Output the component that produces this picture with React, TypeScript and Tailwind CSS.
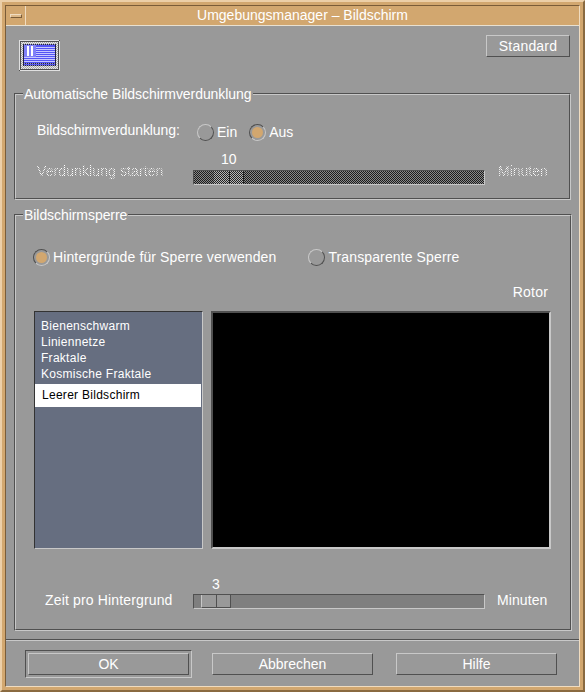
import React from "react";

function Btn({ label, w }: { label: string; w: string }) {
  return (
    <div className={`${w} h-[22px] flex items-center justify-center border border-t-[#c8c8c8] border-l-[#c8c8c8] border-r-[#505050] border-b-[#505050] text-[14px] text-white`}>
      {label}
    </div>
  );
}

function Radio({ on, label, wide }: { on?: boolean; label: string; wide?: boolean }) {
  return (
    <div className="flex items-center gap-[3px]">
      <div
        className={
          on
            ? "w-[17px] h-[17px] rounded-full border border-t-[#505050] border-l-[#505050] border-r-[#c8c8c8] border-b-[#c8c8c8] flex items-center justify-center"
            : "w-[17px] h-[17px] rounded-full border border-t-[#c8c8c8] border-l-[#c8c8c8] border-r-[#505050] border-b-[#505050]"
        }
      >
        {on && <div className="w-[11px] h-[11px] rounded-full bg-[#d2a76f]" />}
      </div>
      <span className={wide ? "text-[14px] text-white tracking-[0.12px]" : "text-[14px] text-white"}>{label}</span>
    </div>
  );
}

function Group({ title, className, children }: { title: string; className: string; children: React.ReactNode }) {
  return (
    <div className={`relative border border-t-[#505050] border-l-[#505050] border-r-[#c8c8c8] border-b-[#c8c8c8] ${className}`}>
      <div className="h-full border border-t-[#c8c8c8] border-l-[#c8c8c8] border-r-[#505050] border-b-[#505050]">
        {children}
      </div>
      <div className="absolute left-[8px] top-[-8px] bg-[#999999] px-[1px] text-[14px] leading-[16px] text-white tracking-[-0.06px]">{title}</div>
    </div>
  );
}

function Icon() {
  return (
    <svg width="41" height="31" viewBox="0 0 41 31" shapeRendering="crispEdges">
      <defs>
        <pattern id="st" width="2" height="2" patternUnits="userSpaceOnUse">
          <rect width="2" height="2" fill="#a8a8a8" />
          <rect width="1" height="1" fill="#e8e8e8" />
          <rect x="1" y="1" width="1" height="1" fill="#e8e8e8" />
        </pattern>
        <pattern id="da" width="2" height="1" patternUnits="userSpaceOnUse">
          <rect width="2" height="1" fill="#9090c0" />
          <rect width="1" height="1" fill="#202040" />
        </pattern>
      </defs>
      <rect width="41" height="31" fill="#505050" />
      <rect width="40" height="1" fill="#e0e0e0" />
      <rect width="1" height="30" fill="#e0e0e0" />
      <rect x="1" y="30" width="40" height="1" fill="#e0e0e0" />
      <rect x="40" y="1" width="1" height="30" fill="#e0e0e0" />
      <rect x="2" y="2" width="37" height="27" fill="url(#st)" />
      <rect x="4" y="4" width="33" height="22" fill="url(#da)" />
      <rect x="5" y="5" width="31" height="20" fill="#5454f4" />
      {[7, 9, 11, 13, 15, 17, 19, 21].map((y) => (
        <rect key={y} x="5" y={y} width="31" height="1" fill="#c8c8ff" />
      ))}
      <rect x="5" y="5" width="12" height="12" fill="#8080f8" />
      <rect x="8" y="6" width="2" height="10" fill="#fff" />
      <rect x="12" y="6" width="2" height="10" fill="#fff" />
      <rect x="5" y="23" width="31" height="1" fill="url(#da)" />
    </svg>
  );
}

const disabled =
  "text-[14px] text-transparent bg-clip-text bg-[repeating-conic-gradient(#ffffff_0_25%,#999999_0_50%)] bg-[length:2px_2px]";

export default function App() {
  return (
    <div className="w-[585px] h-[692px] bg-[#d2a76f] border-t-2 border-l-2 border-t-[#eccfa8] border-l-[#eccfa8] border-r-2 border-b-2 border-r-[#8a6a40] border-b-[#8a6a40] p-[3px] font-['Liberation_Sans',Arial,sans-serif]">
      <div className="h-full flex flex-col bg-[#999999] border border-t-[#7a5c38] border-l-[#7a5c38] border-r-[#f0dcc0] border-b-[#f0dcc0]">
        {/* title bar */}
        <div className="h-[20px] shrink-0 flex bg-[#d2a76f] border-b border-b-[#e8e0d0]">
          <div className="w-[20px] shrink-0 flex items-center justify-center border-r border-r-[#f0dcc0]">
            <div className="w-[12px] h-[4px] bg-[#dcb888] border border-t-[#f0dcc0] border-l-[#f0dcc0] border-r-[#7a5c38] border-b-[#7a5c38]" />
          </div>
          <div className="flex-1 text-center text-[14px] leading-[19px] text-white">Umgebungsmanager – Bildschirm</div>
        </div>

        {/* header */}
        <div className="flex justify-between items-start h-[67px] shrink-0 pl-[13px] pr-[9px] pt-[9px]">
          <div className="pt-[5px]"><Icon /></div>
          <Btn label="Standard" w="w-[84px] tracking-[0.2px]" />
        </div>

        {/* group 1 */}
        <Group title="Automatische Bildschirmverdunklung" className="h-[107px] shrink-0 ml-[8px] mr-[8px]">
          <div className="flex items-center h-[28px] mt-[23px] pl-[21px]">
            <span className="w-[160px] pb-[4px] text-[14px] text-white tracking-[-0.09px]">Bildschirmverdunklung:</span>
            <Radio label="Ein" />
            <div className="w-[12px]" />
            <Radio on label="Aus" />
          </div>
          <div className="flex items-end h-[39px] pl-[21px]">
            <span className={`w-[156px] pb-[3px] tracking-[0.1px] ${disabled}`}>Verdunklung starten</span>
            <div className="relative w-[292px] h-[15px] border border-t-[#505050] border-l-[#505050] border-r-[#c8c8c8] border-b-[#c8c8c8] bg-[repeating-conic-gradient(#1c1c1c_0_25%,#888888_0_50%)] bg-[length:2px_2px]">
              <div className="absolute left-[20px] top-0 bottom-0 w-[30px] bg-[repeating-conic-gradient(#222222_0_25%,#b4b4b4_0_50%)] bg-[length:2px_2px] border-r border-r-[#222]" />
              <div className="absolute left-[35px] top-0 bottom-0 w-px bg-[#222]" />
              <div className="absolute left-[27px] top-[-20px] text-[14px] leading-[16px] text-white">10</div>
            </div>
            <span className={`ml-[13px] pb-[3px] ${disabled}`}>Minuten</span>
          </div>
        </Group>

        {/* group 2 */}
        <Group title="Bildschirmsperre" className="h-[417px] shrink-0 mt-[14px] ml-[8px] mr-[7px]">
          <div className="flex items-center gap-[32px] h-[20px] mt-[31px] pl-[17px]">
            <Radio on wide label="Hintergründe für Sperre verwenden" />
            <Radio wide label="Transparente Sperre" />
          </div>
          <div className="h-[16px] mt-[17px] pr-[22px] text-right text-[14px] leading-[16px] text-white tracking-[0.2px]">Rotor</div>
          <div className="flex gap-[8px] mt-[11px] pl-[18px]">
            <div className="w-[169px] h-[238px] bg-[#666e80] border border-t-[#333] border-l-[#333] border-r-[#c8c8c8] border-b-[#c8c8c8] text-[12px] text-white tracking-[0.28px]">
              <div className="pt-[6px]">
                {["Bienenschwarm", "Liniennetze", "Fraktale", "Kosmische Fraktale"].map((t) => (
                  <div key={t} className="h-[16px] leading-[16px] pl-[6px]">{t}</div>
                ))}
                <div className="h-[23px] mt-[2px] leading-[23px] pl-[7px] bg-white text-black mr-px">Leerer Bildschirm</div>
              </div>
            </div>
            <div className="w-[340px] h-[238px] bg-black border-2 border-t-[#505050] border-l-[#505050] border-r-[#c8c8c8] border-b-[#c8c8c8]" />
          </div>
          <div className="flex items-center h-[15px] mt-[45px] pl-[29px]">
            <span className="w-[148px] pb-[2px] text-[14px] text-white tracking-[0.15px]">Zeit pro Hintergrund</span>
            <div className="relative w-[292px] h-[15px] border border-t-[#505050] border-l-[#505050] border-r-[#c8c8c8] border-b-[#c8c8c8] bg-[#7f7f7f]">
              <div className="absolute left-[7px] top-0 bottom-0 w-[30px] bg-[#999999] border-l border-l-[#c8c8c8] border-r border-r-[#505050] border-b border-b-[#505050]" />
              <div className="absolute left-[22px] top-0 bottom-0 w-px bg-[#505050]" />
              <div className="absolute left-[18px] top-[-19px] text-[14px] leading-[16px] text-white">3</div>
            </div>
            <span className="ml-[12px] pb-[2px] text-[14px] text-white tracking-[0.1px]">Minuten</span>
          </div>
        </Group>

        {/* bottom */}
        <div className="mt-[8px] shrink-0 border-t border-t-[#505050]">
          <div className="border-t border-t-[#c8c8c8] h-[47px] flex items-center pl-[19px]">
            <div className="p-[2px] border border-t-[#505050] border-l-[#505050] border-r-[#c8c8c8] border-b-[#c8c8c8]">
              <Btn label="OK" w="w-[161px]" />
            </div>
            <div className="ml-[20px]"><Btn label="Abbrechen" w="w-[161px]" /></div>
            <div className="ml-[23px]"><Btn label="Hilfe" w="w-[161px]" /></div>
          </div>
        </div>
      </div>
    </div>
  );
}
